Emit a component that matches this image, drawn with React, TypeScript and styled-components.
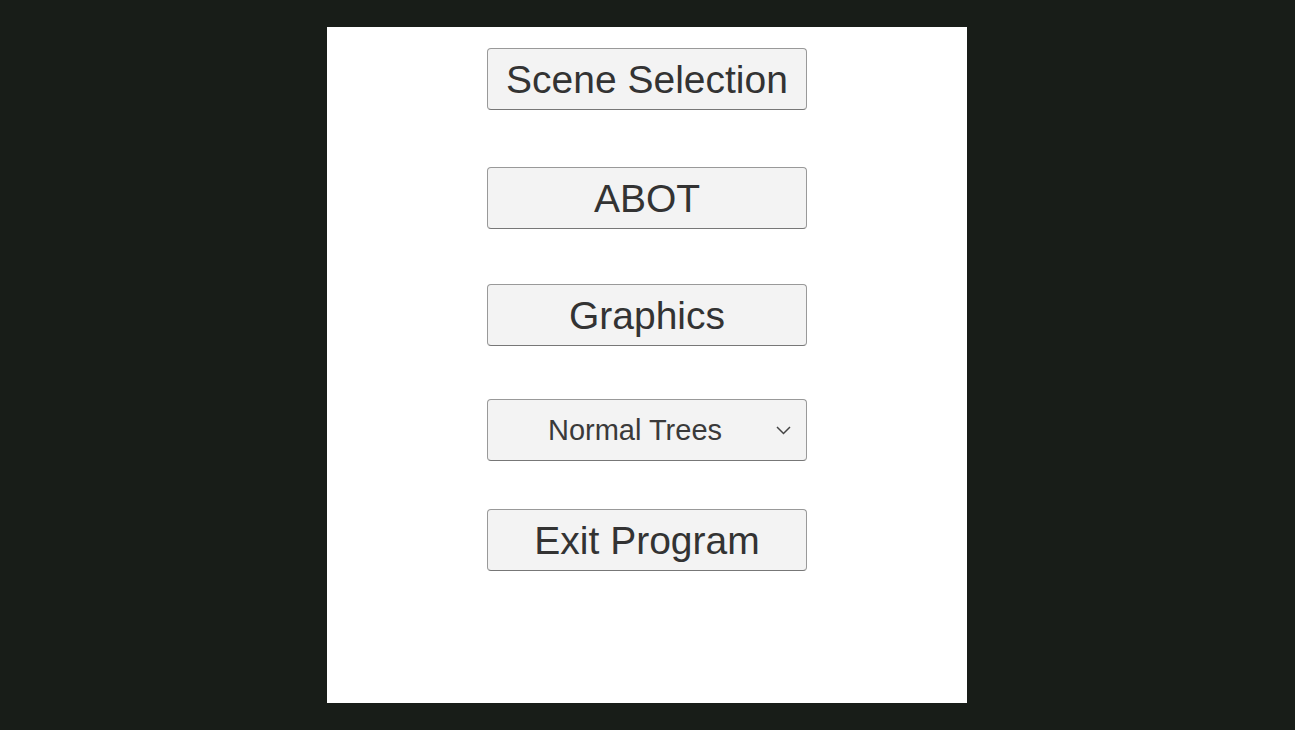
import React from "react";
import styled, { createGlobalStyle } from "styled-components";

const Global = createGlobalStyle`
  html, body { margin: 0; padding: 0; background: #181d18; }
  #root { height: 730px; }
`;

const Stage = styled.div`
  height: 730px;
  display: flex;
  align-items: center;
  justify-content: center;
  padding-right: 1px;
`;

const Panel = styled.div`
  width: 640px;
  height: 676px;
  background: #ffffff;
  display: flex;
  flex-direction: column;
  align-items: center;
  padding-top: 21px;
  box-sizing: border-box;
`;

const MenuButton = styled.button<{ $top: number }>`
  margin-top: ${(p) => p.$top}px;
  width: 320px;
  height: 62px;
  box-sizing: border-box;
  background: #f3f3f3;
  border: 1px solid #999999;
  border-bottom-color: #777777;
  border-radius: 4px;
  color: #333333;
  font-family: "Liberation Sans", Arial, sans-serif;
  font-size: 39px;
  line-height: 1;
  padding: 0;
  display: flex;
  align-items: center;
  justify-content: center;
`;

const Select = styled.div<{ $top: number }>`
  margin-top: ${(p) => p.$top}px;
  width: 320px;
  height: 62px;
  box-sizing: border-box;
  background: #f3f3f3;
  border: 1px solid #999999;
  border-bottom-color: #777777;
  border-radius: 4px;
  color: #3a3a3a;
  font-family: "Liberation Sans", Arial, sans-serif;
  font-size: 29px;
  position: relative;
  display: flex;
  align-items: center;
  justify-content: center;
  padding-right: 24px;
`;

const Chevron = styled.svg`
  position: absolute;
  right: 15px;
  top: 50%;
  margin-top: -4px;
`;

export default function App() {
  return (
    <>
      <Global />
      <Stage>
        <Panel>
          <MenuButton $top={0}>Scene Selection</MenuButton>
          <MenuButton $top={57}>ABOT</MenuButton>
          <MenuButton $top={55}>Graphics</MenuButton>
          <Select $top={53}>
            Normal Trees
            <Chevron width="15" height="9" viewBox="0 0 15 9">
              <path d="M1 1 L7.5 7.5 L14 1" fill="none" stroke="#444" strokeWidth="1.5" />
            </Chevron>
          </Select>
          <MenuButton $top={48}>Exit Program</MenuButton>
        </Panel>
      </Stage>
    </>
  );
}
